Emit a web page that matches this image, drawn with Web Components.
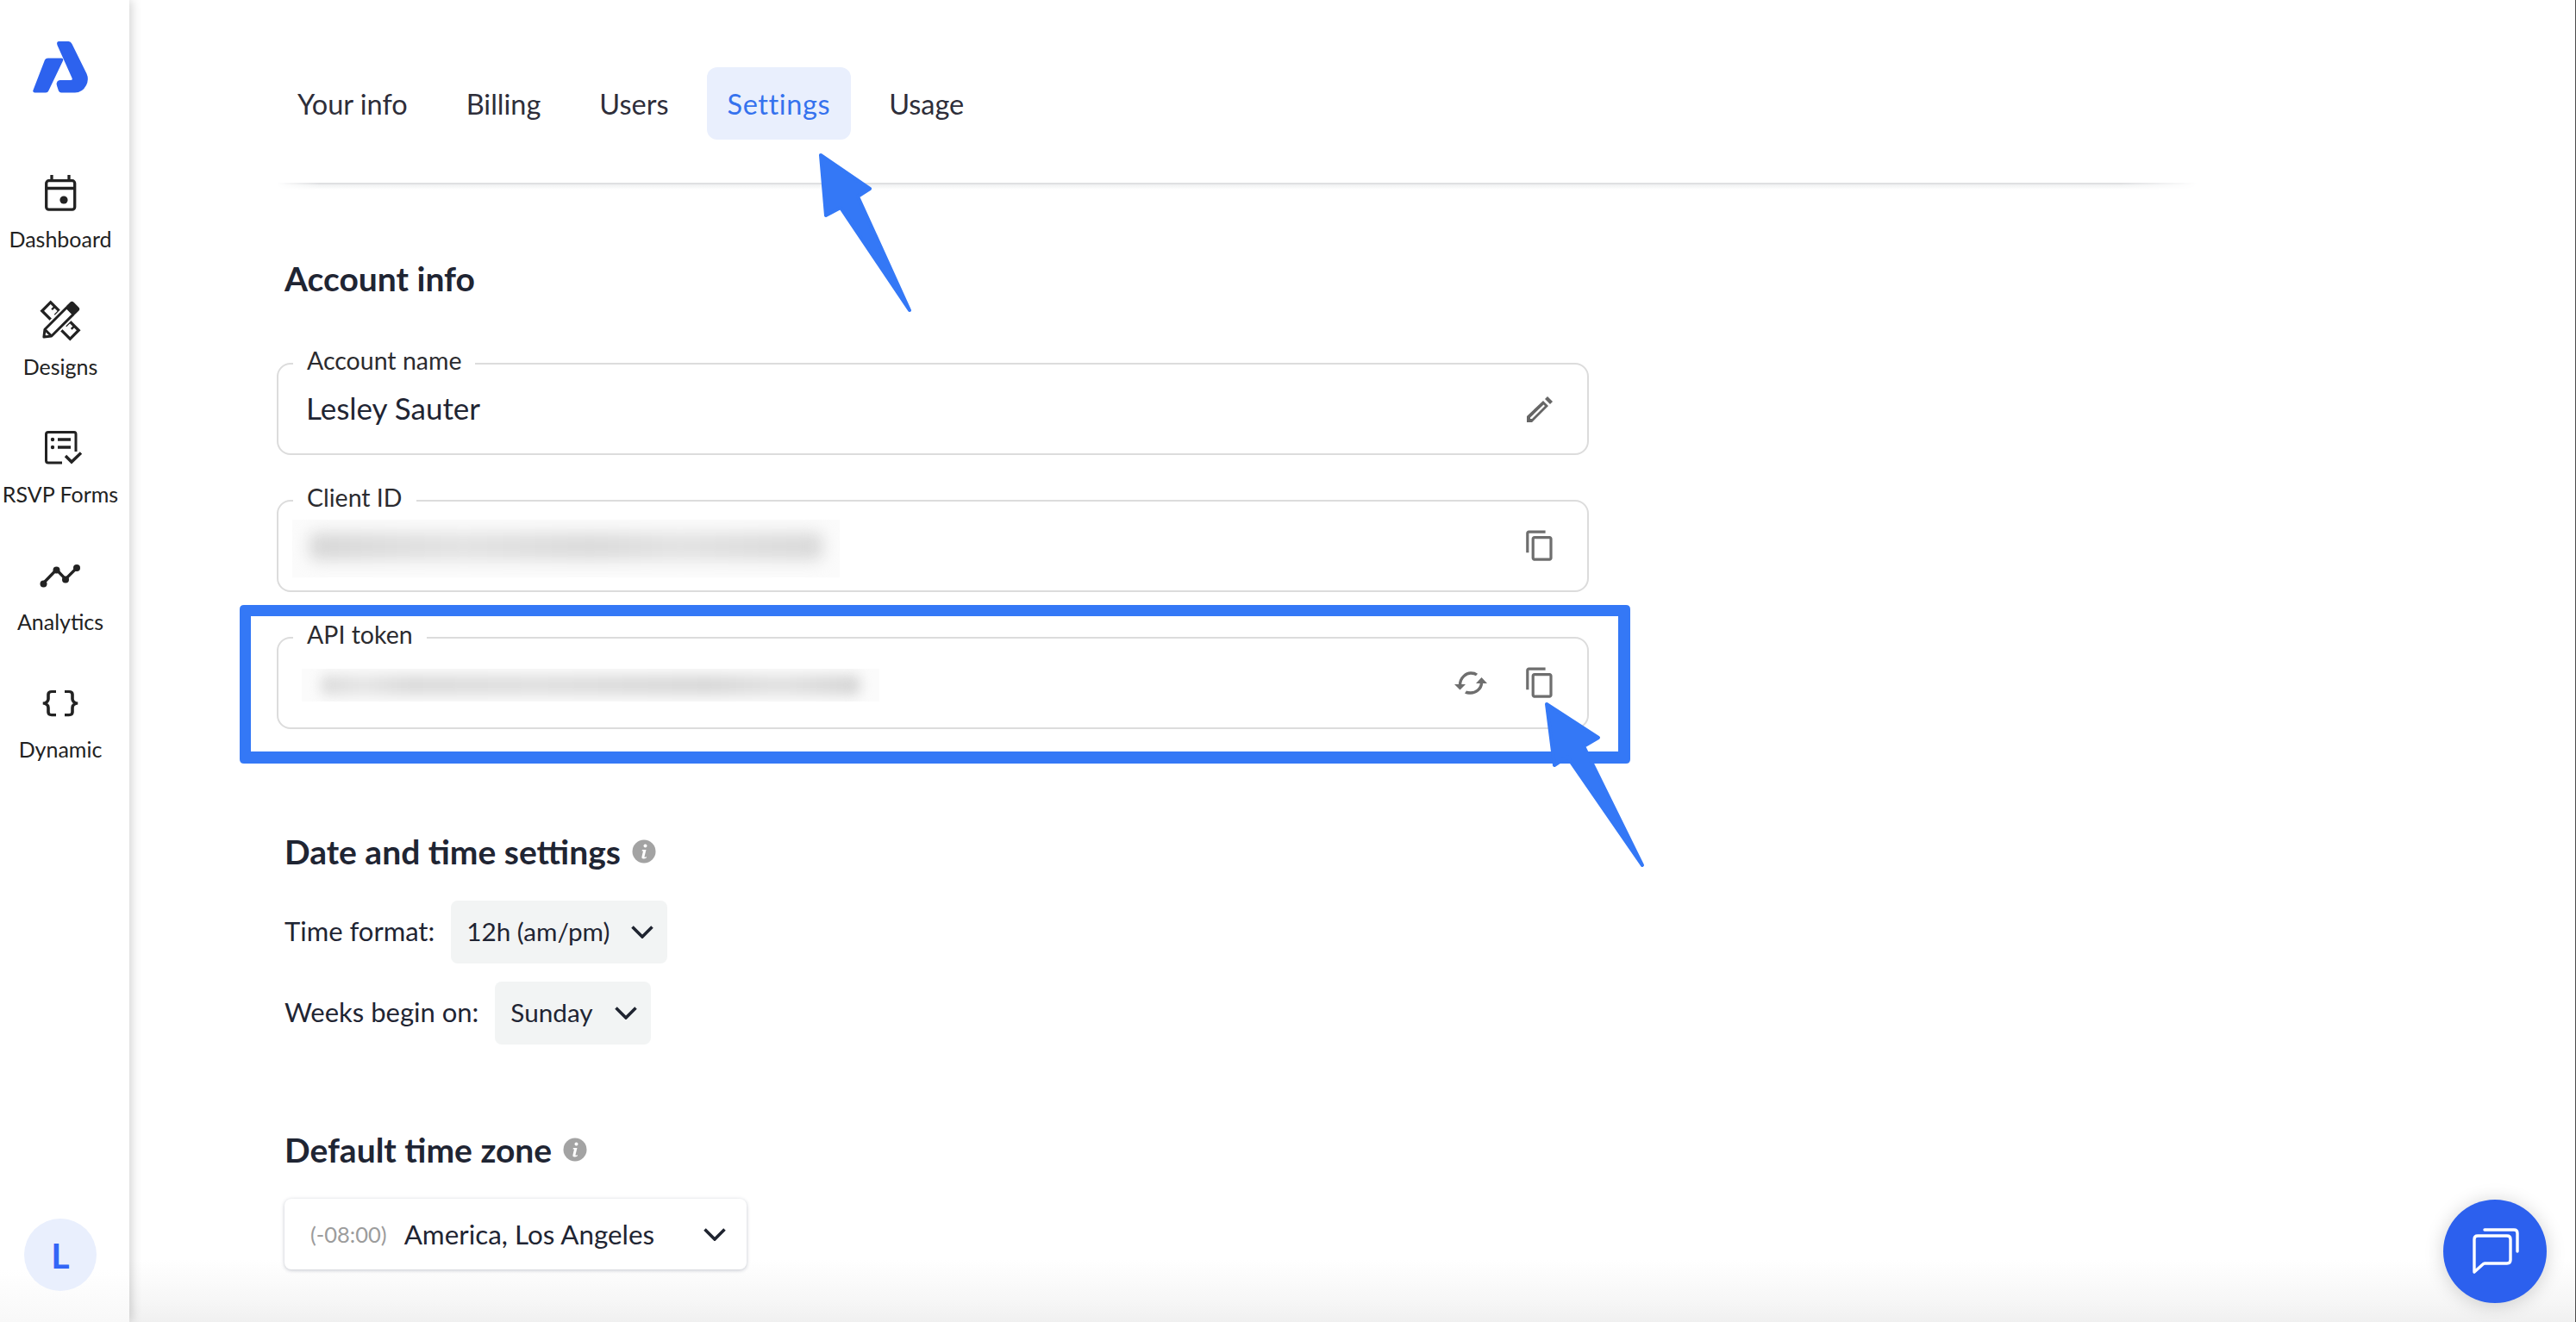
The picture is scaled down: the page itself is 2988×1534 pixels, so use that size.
<!DOCTYPE html>
<html><head><meta charset="utf-8"><title>Settings</title>
<style>
html,body{margin:0;padding:0;background:#fff}
body{font-family:"Lato","Liberation Sans",sans-serif;color:#222}
</style></head><body>
<app-shell>
  <side-nav slot="nav"></side-nav>
  <tab-bar slot="main"></tab-bar>
  <section-title slot="main" style="margin-top:87px">Account info</section-title>
  <text-field slot="main" label="Account name" value="Lesley Sauter" actions="edit" style="margin-top:76px"></text-field>
  <text-field slot="main" label="Client ID" blur="client" actions="copy" style="margin-top:52px"></text-field>
  <text-field slot="main" label="API token" blur="api" actions="sync copy" style="margin-top:52px"></text-field>
  <section-title slot="main" info style="margin-top:120px">Date and time settings</section-title>
  <select-row slot="main" label="Time format:" value="12h (am/pm)" style="margin-top:35px"></select-row>
  <select-row slot="main" label="Weeks begin on:" value="Sunday" style="margin-top:21px"></select-row>
  <section-title slot="main" info style="margin-top:100px">Default time zone</section-title>
  <zone-select slot="main" style="margin-top:35px"></zone-select>
  <annotation-layer slot="overlay"></annotation-layer>
  <chat-button slot="overlay"></chat-button>
</app-shell>
<script>
function el(html){const t=document.createElement('template');t.innerHTML=html;return t.content;}
class Base extends HTMLElement{
  render(html){if(!this.shadowRoot)this.attachShadow({mode:'open'});this.shadowRoot.innerHTML='';this.shadowRoot.append(el(html));}
}
const ICONS={
 edit:`<svg style="margin-right:4px" width="30" height="31" viewBox="0 0 30 31" fill="#666"><path fill-rule="evenodd" d="M0 24 19 6l6 6L6 31H0zM4 25.500V27h2L21 12l-1.500-1.500z"/><path d="M24 1l6 6-3 3-6-6z"/></svg>`,
 copy:`<svg width="38.4" height="38.4" viewBox="0 0 24 24" fill="#6e6e6e"><path d="M16 1H4c-1.100 0-2 .9-2 2v14h2V3h12V1zm3 4H8c-1.100 0-2 .9-2 2v14c0 1.100.9 2 2 2h11c1.100 0 2-.9 2-2V7c0-1.100-.9-2-2-2zm0 16H8V7h11v14z"/></svg>`,
 sync:`<svg width="38" height="29" viewBox="0 0 38 29"><g fill="none" stroke="#6e6e6e" stroke-width="3.400"><path d="M6.500 17C6.500 8 14 3 19 3c3 0 5.500.8 7 2"/><path d="M31.500 14C31.500 22 24 26 19 26c-3 0-5-.3-6-1"/></g><path fill="#6e6e6e" d="M0 16h13l-6.500 6.500zM25 15h13l-6.500-7z"/></svg>`,
 chev:`<svg width="26" height="15" viewBox="0 0 26 15" fill="none" stroke="#1f2430" stroke-width="3.600"><path d="M1.500 1.500 13 13 24.500 1.500"/></svg>`
};
class AppShell extends Base{connectedCallback(){this.render(`<style>
:host{display:block;position:relative;width:2988px;height:1534px;overflow:hidden;background:#fff}
.wrap{display:grid;grid-template-columns:150px 1fr;height:100%;box-sizing:border-box;border-right:1px solid #4d4d4d}
.side{position:relative;z-index:2;background:linear-gradient(to top,#f8f8f8 0,#fff 60px);box-shadow:3px 0 11px rgba(0,0,0,.17);display:flex;flex-direction:column}
.main{padding:78px 0 0 171px;background:linear-gradient(to top,#f0f0f0 0,#f6f6f6 22px,#fff 72px);min-width:0}
.col{display:flex;flex-direction:column;align-items:flex-start}
</style><div class="wrap"><div class="side"><slot name="nav"></slot></div><div class="main"><div class="col"><slot name="main"></slot></div></div></div><slot name="overlay"></slot>`);}}
class SideNav extends Base{connectedCallback(){this.render(`<style>
:host{display:flex;flex-direction:column;align-items:center;height:100%;position:relative;box-sizing:border-box;padding:48px 10px 0 0}
.logo{display:block;margin-left:1px}
nav{display:flex;flex-direction:column;align-items:center;margin-top:95px;width:100%}
.item{display:flex;flex-direction:column;align-items:center;height:148px;width:100%;font-size:25px;color:#222}
.ic{height:42px;width:44px;display:block;overflow:visible}
.lb{margin-top:18px;line-height:28px;white-space:nowrap}
.av{margin-top:auto;margin-bottom:36px;width:84px;height:84px;border-radius:50%;background:#e9effd;color:#3366f6;display:flex;align-items:center;justify-content:center;font-size:41px;font-weight:700}
</style>
<svg class="logo" width="66" height="60" viewBox="38 48 66 60" fill="#2d62ee">
<path d="M52 69.500q1-2 3.500-2h16q2.500.5 1.500 3L56.500 105q-1 2.500-3.500 2.500H40q-2.500-.5-1.500-3z"/>
<path d="M66.500 52.500q-1.500-4.500 2-4.500h11q2.500 0 4 3l17 34.500q3 6.500-.5 13.500-4.500 8.500-13 8.500H71q-2 0-3-2l-2-6q-1-3 .5-5 1-1.500 3-1.500H82q2.500 0 1.500-2.500z"/></svg>
<nav>
<div class="item"><svg class="ic" viewBox="0 0 44 42" fill="none" stroke="#222" stroke-width="3.300"><rect x="5.700" y="6.700" width="33" height="33.500" rx="3"/><path d="M4.500 15.500h35M12 0v6M32 0v6"/><circle cx="26" cy="29" r="4.600" fill="#222" stroke="none"/></svg><span class="lb">Dashboard</span></div>
<div class="item"><svg class="ic" viewBox="0 -1 44 42"><g transform="translate(2 0)">
<g transform="rotate(45 20 20)" fill="#fff" stroke="#222" stroke-width="3.300"><rect x="-3" y="13" width="46" height="14"/><path d="M4 13v5M11 13v7M29 13v7M36 13v5" fill="none" stroke-width="2.400"/></g>
<g transform="rotate(-45 20 20)"><path d="M-7 20 0 14.500H36V25.500H0z" fill="#fff" stroke="#fff" stroke-width="7"/><path d="M-7 20 0 14.500H36V25.500H0zM0 14.500V25.500" fill="#fff" stroke="#222" stroke-width="3" stroke-linejoin="round"/><rect x="35" y="13" width="11" height="14" rx="3" fill="#222"/></g></g></svg><span class="lb">Designs</span></div>
<div class="item"><svg class="ic" viewBox="0 0 44 42" fill="none" stroke="#222" stroke-width="3.300"><path d="M24 38H8q-2.500 0-2.500-2.500V5Q5.500 2.500 8 2.500h30q2 0 2 2.500v20" stroke-width="3"/><path d="M19 11h15M19 20h15" stroke-width="3.400"/><circle cx="13" cy="11" r="2.200" fill="#222" stroke="none"/><circle cx="13" cy="20" r="2.200" fill="#222" stroke="none"/><path d="M28 30l7 7 11-10.500" stroke-width="3.400"/></svg><span class="lb">RSVP Forms</span></div>
<div class="item"><svg class="ic" viewBox="0 -6 44 42" fill="#222"><path d="M2 24 17.500 8 28 19 41 6" fill="none" stroke="#222" stroke-width="3.300"/><circle cx="2.500" cy="24.500" r="4"/><circle cx="17.500" cy="8.500" r="4"/><circle cx="28" cy="19.500" r="4"/><circle cx="41" cy="6" r="4"/></svg><span class="lb">Analytics</span></div>
<div class="item"><svg class="ic" viewBox="0 0 44 42" fill="none" stroke="#222" stroke-width="3.600"><path d="M17 7H12Q8 7 8 11v6q0 5-6 6 6 1 6 6v6q0 4 4 4h5M27 7h5q4 0 4 4v6q0 5 6 6-6 1-6 6v6q0 4-4 4h-5" transform="translate(0 1.500) scale(1 .85)"/></svg><span class="lb">Dynamic</span></div>
</nav>
<div class="av">L</div>`);}}
class TabBar extends Base{connectedCallback(){this.render(`<style>
:host{display:block;width:2228px}
.tabs{display:flex;gap:20px}
.t{height:84px;display:flex;align-items:center;padding:0 24px;font-size:32.500px;color:#2e2e3a;border-radius:12px}
.a{background:#e9effd;color:#3572ee;letter-spacing:.6px}
.d{margin-top:50px;height:2px;background:#dfe0e2;-webkit-mask-image:linear-gradient(to right,transparent,#000 50px,#000 calc(100% - 90px),transparent);mask-image:linear-gradient(to right,transparent,#000 50px,#000 calc(100% - 90px),transparent)}
.s{height:6px;background:linear-gradient(#eff0f1,#fff);-webkit-mask-image:linear-gradient(to right,transparent,#000 50px,#000 calc(100% - 90px),transparent);mask-image:linear-gradient(to right,transparent,#000 50px,#000 calc(100% - 90px),transparent)}
.r{height:0}
</style><div class="tabs"><div class="t">Your info</div><div class="t">Billing</div><div class="t">Users</div><div class="t a">Settings</div><div class="t">Usage</div></div><div class="d"></div><div class="r"><div class="s"></div></div>`);}}
class SectionTitle extends Base{connectedCallback(){this.render(`<style>
:host{display:flex;align-items:center;gap:13px;height:44px;margin-left:9px;font-size:39px;font-weight:700;color:#1f2533;white-space:nowrap}
svg{display:${this.hasAttribute('info')?'block':'none'}}
</style><slot></slot><svg width="28" height="28" viewBox="0 0 28 28"><circle cx="14" cy="14" r="13.500" fill="#a3a3a3"/><circle cx="15.500" cy="7.500" r="2" fill="#fff"/><path d="M12 12h4.500l-2 8c-.2 1 .8 1 2.500 0l-.3 1.500c-2.500 1.500-6 1.500-5.200-1.500l1.500-6.500H11.500z" fill="#fff"/></svg>`);}}
const BLURS={
 client:{x:339,w:635,h:67,mt:6,top:15,ih:32,bg:'linear-gradient(90deg,#d6d6d6 0,#dedede 18%,#e2e2e2 30%,#dadada 55%,#e2e2e2 72%,#d8d8d8 100%)',inset:20,b:9},
 api:{x:350,w:670,h:38,mt:4,top:7,ih:24,bg:'linear-gradient(90deg,#dcdcdc 0,#e6e6e6 8%,#dcdcdc 16%,#e0e0e0 40%,#d9d9d9 72%,#e2e2e2 85%,#d6d6d6 100%)',inset:22,b:7}
};
class TextField extends Base{connectedCallback(){
 const acts=(this.getAttribute('actions')||'').split(' ').filter(Boolean);
 const b=BLURS[this.getAttribute('blur')];let content='';
 if(b){content=`<div class="blur" style="margin-left:${b.x-355}px;width:${b.w}px;height:${b.h}px;margin-top:${b.mt}px"><i style="left:${b.inset}px;right:${b.inset}px;top:${b.top}px;height:${b.ih}px;background:${b.bg};filter:blur(${b.b}px)"></i></div>`;}
 else content=`<span class="v">${this.getAttribute('value')||''}</span>`;
 this.render(`<style>
:host{display:block;width:1522px}
fieldset{box-sizing:border-box;height:107px;margin:0;padding:0 36px 0 32px;border:2px solid #dcdcdc;border-radius:16px;display:flex;align-items:center;min-width:0}
legend{height:2px;line-height:2px;font-size:28.500px;color:#2b2b2f;padding:0 16px;margin-left:-15px;white-space:nowrap}
legend span{display:inline-block;transform:translateY(-4.500px)}
.v{font-size:35px;color:#1f2533;flex:1;padding-bottom:3px}
.acts{margin-left:auto;display:flex;align-items:center;gap:42px}
.acts svg{display:block}
.blur{position:relative;background:#fbfbfb;overflow:hidden}
.blur i{position:absolute;border-radius:8px}
</style><fieldset><legend><span>${this.getAttribute('label')}</span></legend>${content}<div class="acts">${acts.map(a=>ICONS[a]).join('')}</div></fieldset>`);}}
class SelectRow extends Base{connectedCallback(){this.render(`<style>
:host{display:flex;align-items:center;height:73px;gap:19px;font-size:31px;color:#1f2533;white-space:nowrap;margin-left:9px}
.s{height:73px;box-sizing:border-box;display:flex;align-items:center;gap:25px;padding:0 16px 0 18px;background:#f2f4f4;border-radius:8px;font-size:29.700px}
span{padding-bottom:3px}
svg{display:block}
</style><span>${this.getAttribute('label')}</span><div class="s"><span>${this.getAttribute('value')}</span>${ICONS.chev}</div>`);}}
class ZoneSelect extends Base{connectedCallback(){this.render(`<style>
:host{display:flex;align-items:center;width:536px;height:82px;box-sizing:border-box;margin-left:9px;padding:0 24px 0 30px;background:#fff;border-radius:8px;box-shadow:0 1px 4px rgba(40,50,80,.28);font-size:31.400px;color:#1f2533;white-space:nowrap}
.o{color:#9c9c9c;font-size:25.500px;margin-right:20px}
svg{margin-left:auto;display:block}
</style><span class="o">(-08:00)</span><span>America, Los Angeles</span>${ICONS.chev}`);}}
class AnnotationLayer extends Base{connectedCallback(){this.render(`<style>
:host{position:absolute;left:0;top:0;width:2988px;height:1534px;pointer-events:none;z-index:3;display:block}
svg{display:block}
</style><svg width="2988" height="1534" viewBox="0 0 2988 1534" fill="#3478f6">
<path fill-rule="evenodd" d="M283 702H1886q5 0 5 5V881q0 5-5 5H283q-5 0-5-5V707q0-5 5-5zM291 715V872H1877V715z"/>
<path stroke="#3478f6" stroke-width="4" stroke-linejoin="round" d="M952 180 1009 219 995 228 1055 360 975 241 958 250z"/>
<path stroke="#3478f6" stroke-width="4" stroke-linejoin="round" d="M1794 817 1854 856 1837 866 1905 1004 1818 878 1803 888z"/>
</svg>`);}}
class ChatButton extends Base{connectedCallback(){this.render(`<style>
:host{position:absolute;left:2834px;top:1392px;width:120px;height:120px;border-radius:50%;background:#2c60ee;box-shadow:0 2px 22px rgba(0,0,0,.18);z-index:4;display:flex;align-items:center;justify-content:center}
svg{display:block}
</style><svg width="56" height="56" viewBox="0 0 56 56" fill="none" stroke="#fff" stroke-width="3.400" stroke-linecap="round" stroke-linejoin="round"><path d="M16 3H50q4 0 4 4v21"/><path d="M4 52V14q0-4 4-4h34q4 0 4 4v24q0 4-4 4H16q-1 0-2 1z"/></svg>`);}}
customElements.define('app-shell',AppShell);customElements.define('side-nav',SideNav);customElements.define('tab-bar',TabBar);customElements.define('section-title',SectionTitle);customElements.define('text-field',TextField);customElements.define('select-row',SelectRow);customElements.define('zone-select',ZoneSelect);customElements.define('annotation-layer',AnnotationLayer);customElements.define('chat-button',ChatButton);
</script>
</body></html>
